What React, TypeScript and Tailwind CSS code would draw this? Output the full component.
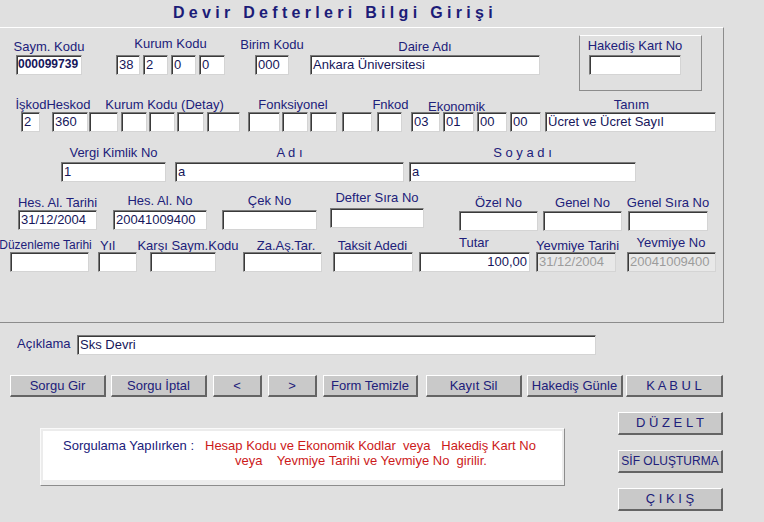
import React, { FC, ReactNode } from 'react';

interface PromptProps {
    className?: string,
    small?: boolean,
    children: ReactNode,
}

// centered prompt, text may overflow its slot on both sides
const Prompt: FC<PromptProps> = ({ className = '', small = false, children }) => (
    <div className={`flex shrink-0 justify-center whitespace-nowrap leading-[15px] text-[#20207a] ${small ? 'text-[12px]' : 'text-[13px]'} ${className}`}>
        {children}
    </div>
);

interface BoxProps {
    className?: string,
    value?: string,
    bold?: boolean,
    right?: boolean,
    disabled?: boolean,
}

const Box: FC<BoxProps> = ({ className = '', value = '', bold = false, right = false, disabled = false }) => (
    <div
        className={`h-[20px] shrink-0 overflow-hidden whitespace-nowrap border border-[#d4d4d4] border-t-[#7a7a7a] border-l-[#7a7a7a] leading-[17px] shadow-[inset_1px_1px_0_#3a3a3a] ${bold ? 'px-[1px] text-[12px] font-bold' : 'px-[2px] text-[13px]'} ${disabled ? 'bg-[#e8e8e8] text-[#9c9c9c]' : 'bg-white text-[#16165a]'} ${right ? 'text-right' : ''} ${className}`}
    >
        {value}
    </div>
);

interface BtnProps {
    className?: string,
    small?: boolean,
    children: ReactNode,
}

const Btn: FC<BtnProps> = ({ className = '', small = false, children }) => (
    <div className={`flex shrink-0 items-center justify-center whitespace-pre border-t border-l border-white border-r-2 border-b-2 border-r-[#646464] border-b-[#646464] bg-[#c9c9c9] text-[#20207a] ${small ? 'text-[12px]' : 'text-[13px]'} ${className}`}>
        {children}
    </div>
);

const App: FC = () => (
    <div className="h-[522px] w-[764px] overflow-hidden bg-[#e0e0e0] font-['Liberation_Sans',Arial,sans-serif]">
        <div className="h-[27px] whitespace-nowrap pl-[173px] pt-[4px] text-[16px] font-bold leading-[18px] tracking-[4.3px] text-[#1c1c78]">
            Devir Defterleri Bilgi Girişi
        </div>

        <section className="h-[296px] w-[724px] border-t border-r border-b border-t-white border-r-[#8c8c8c] border-b-[#8c8c8c]">
            {/* saymanlik / kurum / daire */}
            <div className="flex h-[63px] items-start">
                <div className="ml-[16px] flex w-[66px] flex-col items-center">
                    <Prompt className="mt-[11px]">Saym. Kodu</Prompt>
                    <Box className="mt-[1px] w-[66px]" value="000099739" bold />
                </div>
                <div className="ml-[34px] flex w-[109px] flex-col items-center">
                    <Prompt className="mt-[8px]">Kurum Kodu</Prompt>
                    <div className="mt-[4px] flex">
                        <Box className="w-[24px]" value="38" />
                        <Box className="ml-[3px] w-[25px]" value="2" />
                        <Box className="ml-[3px] w-[25px]" value="0" />
                        <Box className="ml-[3px] w-[26px]" value="0" />
                    </div>
                </div>
                <div className="ml-[30px] flex w-[34px] flex-col items-center">
                    <Prompt className="mt-[9px]">Birim Kodu</Prompt>
                    <Box className="mt-[3px] w-[34px]" value="000" />
                </div>
                <div className="ml-[21px] flex w-[230px] flex-col items-center">
                    <Prompt className="mt-[11px]">Daire Adı</Prompt>
                    <Box className="mt-[1px] w-[230px]" value="Ankara Üniversitesi" />
                </div>
                <div className="ml-[39px] mt-[7px] h-[56px] w-[123px] border border-[#8c8c8c] border-t-white pl-[9px]">
                    <div className="flex w-[92px] flex-col items-center">
                        <Prompt className="mt-[2px]">Hakediş Kart No</Prompt>
                        <Box className="mt-[2px] w-[92px]" />
                    </div>
                </div>
            </div>

            {/* hesap kodlari */}
            <div className="mt-[6px] flex h-[15px] items-start">
                <Prompt className="ml-[21px] w-[20px]">İşkod</Prompt>
                <Prompt className="w-[55px]">Heskod</Prompt>
                <Prompt className="w-[137px]">Kurum Kodu (Detay)</Prompt>
                <Prompt className="w-[120px]">Fonksiyonel</Prompt>
                <Prompt className="w-[75px]">Fnkod</Prompt>
                <Prompt className="mt-[2px] w-[57px]">Ekonomik</Prompt>
                <Prompt className="ml-[62px] w-[169px]">Tanım</Prompt>
            </div>
            <div className="flex h-[20px]">
                <Box className="ml-[21px] w-[19px]" value="2" />
                <Box className="ml-[12px] w-[36px]" value="360" />
                <Box className="ml-[1px] w-[29px]" />
                <Box className="ml-[3px] w-[26px]" />
                <Box className="ml-[2px] w-[26px]" />
                <Box className="ml-[2px] w-[27px]" />
                <Box className="ml-[3px] w-[33px]" />
                <Box className="ml-[8px] w-[32px]" />
                <Box className="ml-[2px] w-[26px]" />
                <Box className="ml-[2px] w-[27px]" />
                <Box className="ml-[5px] w-[30px]" />
                <Box className="ml-[5px] w-[25px]" />
                <Box className="ml-[9px] w-[29px]" value="03" />
                <Box className="ml-[3px] w-[31px]" value="01" />
                <Box className="ml-[3px] w-[30px]" value="00" />
                <Box className="ml-[3px] w-[31px]" value="00" />
                <Box className="ml-[4px] w-[171px]" value="Ücret ve Ücret Sayıl" />
            </div>

            {/* kimlik */}
            <div className="mt-[13px] flex h-[15px]">
                <Prompt className="ml-[61px] w-[105px]">Vergi Kimlik No</Prompt>
                <Prompt className="ml-[9px] w-[229px]">A d ı</Prompt>
                <Prompt className="ml-[5px] w-[227px]">S o y a d ı</Prompt>
            </div>
            <div className="mt-[2px] flex h-[20px]">
                <Box className="ml-[61px] w-[105px]" value="1" />
                <Box className="ml-[9px] w-[229px]" value="a" />
                <Box className="ml-[5px] w-[227px]" value="a" />
            </div>

            {/* hesaba alma */}
            <div className="mt-[13px] flex h-[15px] items-start">
                <Prompt className="ml-[18px] w-[79px]">Hes. Al. Tarihi</Prompt>
                <Prompt className="-mt-[2px] ml-[16px] w-[94px]">Hes. Al. No</Prompt>
                <Prompt className="-mt-[2px] ml-[15px] w-[95px]">Çek No</Prompt>
                <Prompt className="-mt-[5px] ml-[13px] w-[94px]">Defter Sıra No</Prompt>
                <Prompt className="ml-[35px] w-[79px]">Özel No</Prompt>
                <Prompt className="ml-[5px] w-[79px]">Genel No</Prompt>
                <Prompt className="ml-[6px] w-[80px]">Genel Sıra No</Prompt>
            </div>
            <div className="flex h-[20px] items-start">
                <Box className="ml-[18px] w-[79px]" value="31/12/2004" />
                <Box className="ml-[16px] w-[94px]" value="20041009400" />
                <Box className="ml-[15px] w-[95px]" />
                <Box className="-mt-[2px] ml-[13px] w-[94px]" />
                <Box className="mt-[1px] ml-[35px] w-[79px]" />
                <Box className="mt-[1px] ml-[5px] w-[79px]" />
                <Box className="mt-[1px] ml-[6px] w-[80px]" />
            </div>

            {/* duzenleme / yevmiye */}
            <div className="mt-[8px] flex h-[14px] items-start">
                <Prompt className="w-[91px]" small>Düzenleme Tarihi</Prompt>
                <Prompt className="w-[33px]">Yıl</Prompt>
                <Prompt className="w-[128px]">Karşı Saym.Kodu</Prompt>
                <Prompt className="w-[68px]">Za.Aş.Tar.</Prompt>
                <Prompt className="w-[105px]">Taksit Adedi</Prompt>
                <Prompt className="-mt-[3px] w-[98px]">Tutar</Prompt>
                <Prompt className="w-[109px]">Yevmiye Tarihi</Prompt>
                <Prompt className="-mt-[3px] w-[78px]">Yevmiye No</Prompt>
            </div>
            <div className="flex h-[20px]">
                <Box className="ml-[10px] w-[79px]" />
                <Box className="ml-[9px] w-[39px]" />
                <Box className="ml-[13px] w-[66px]" />
                <Box className="ml-[27px] w-[79px]" />
                <Box className="ml-[11px] w-[80px]" />
                <Box className="ml-[6px] w-[111px]" value="100,00" right />
                <Box className="ml-[6px] w-[80px]" value="31/12/2004" disabled />
                <Box className="ml-[11px] w-[89px]" value="20041009400" disabled />
            </div>
        </section>

        <div className="mt-[12px] flex h-[20px] items-start">
            <div className="ml-[17px] mt-[1px] w-[60px] text-[13px] leading-[15px] text-[#20207a]">Açıklama</div>
            <Box className="w-[519px]" value="Sks Devri" />
        </div>

        <div className="mt-[20px] flex h-[22px]">
            <Btn className="ml-[10px] h-[22px] w-[96px]">Sorgu Gir</Btn>
            <Btn className="ml-[5px] h-[22px] w-[96px]">Sorgu İptal</Btn>
            <Btn className="ml-[6px] h-[22px] w-[49px]">&lt;</Btn>
            <Btn className="ml-[6px] h-[22px] w-[49px]">&gt;</Btn>
            <Btn className="ml-[6px] h-[22px] w-[95px]">Form Temizle</Btn>
            <Btn className="ml-[8px] h-[22px] w-[96px]">Kayıt Sil</Btn>
            <Btn className="ml-[5px] h-[22px] w-[96px]">Hakediş Günle</Btn>
            <Btn className="ml-[3px] h-[22px] w-[97px]">K A B U L</Btn>
        </div>

        <div className="flex items-start">
            <div className="ml-[40px] mt-[31px] h-[58px] w-[525px] border border-[#fafafa] border-r-[#8c8c8c] border-b-[#8c8c8c] bg-[#ececec] px-[2px] pt-[2px] pb-[5px]">
                <div className="flex h-full items-start bg-white pl-[20px] pt-[7px] text-[13px] leading-[15px]">
                    <div className="w-[142px] shrink-0 whitespace-nowrap text-[#20207a]">Sorgulama Yapılırken :</div>
                    <div className="whitespace-pre text-[#cc1a1a]">
                        <div>Hesap Kodu ve Ekonomik Kodlar  veya   Hakediş Kart No</div>
                        <div className="pl-[30px]">veya    Yevmiye Tarihi ve Yevmiye No  girilir.</div>
                    </div>
                </div>
            </div>
            <div className="ml-[53px] mt-[15px] flex flex-col gap-[15px]">
                <Btn className="h-[23px] w-[105px]">D Ü Z E L T</Btn>
                <Btn className="h-[23px] w-[105px]" small>SİF OLUŞTURMA</Btn>
                <Btn className="h-[23px] w-[105px]">Ç I K I Ş</Btn>
            </div>
        </div>
    </div>
);

export default App;
